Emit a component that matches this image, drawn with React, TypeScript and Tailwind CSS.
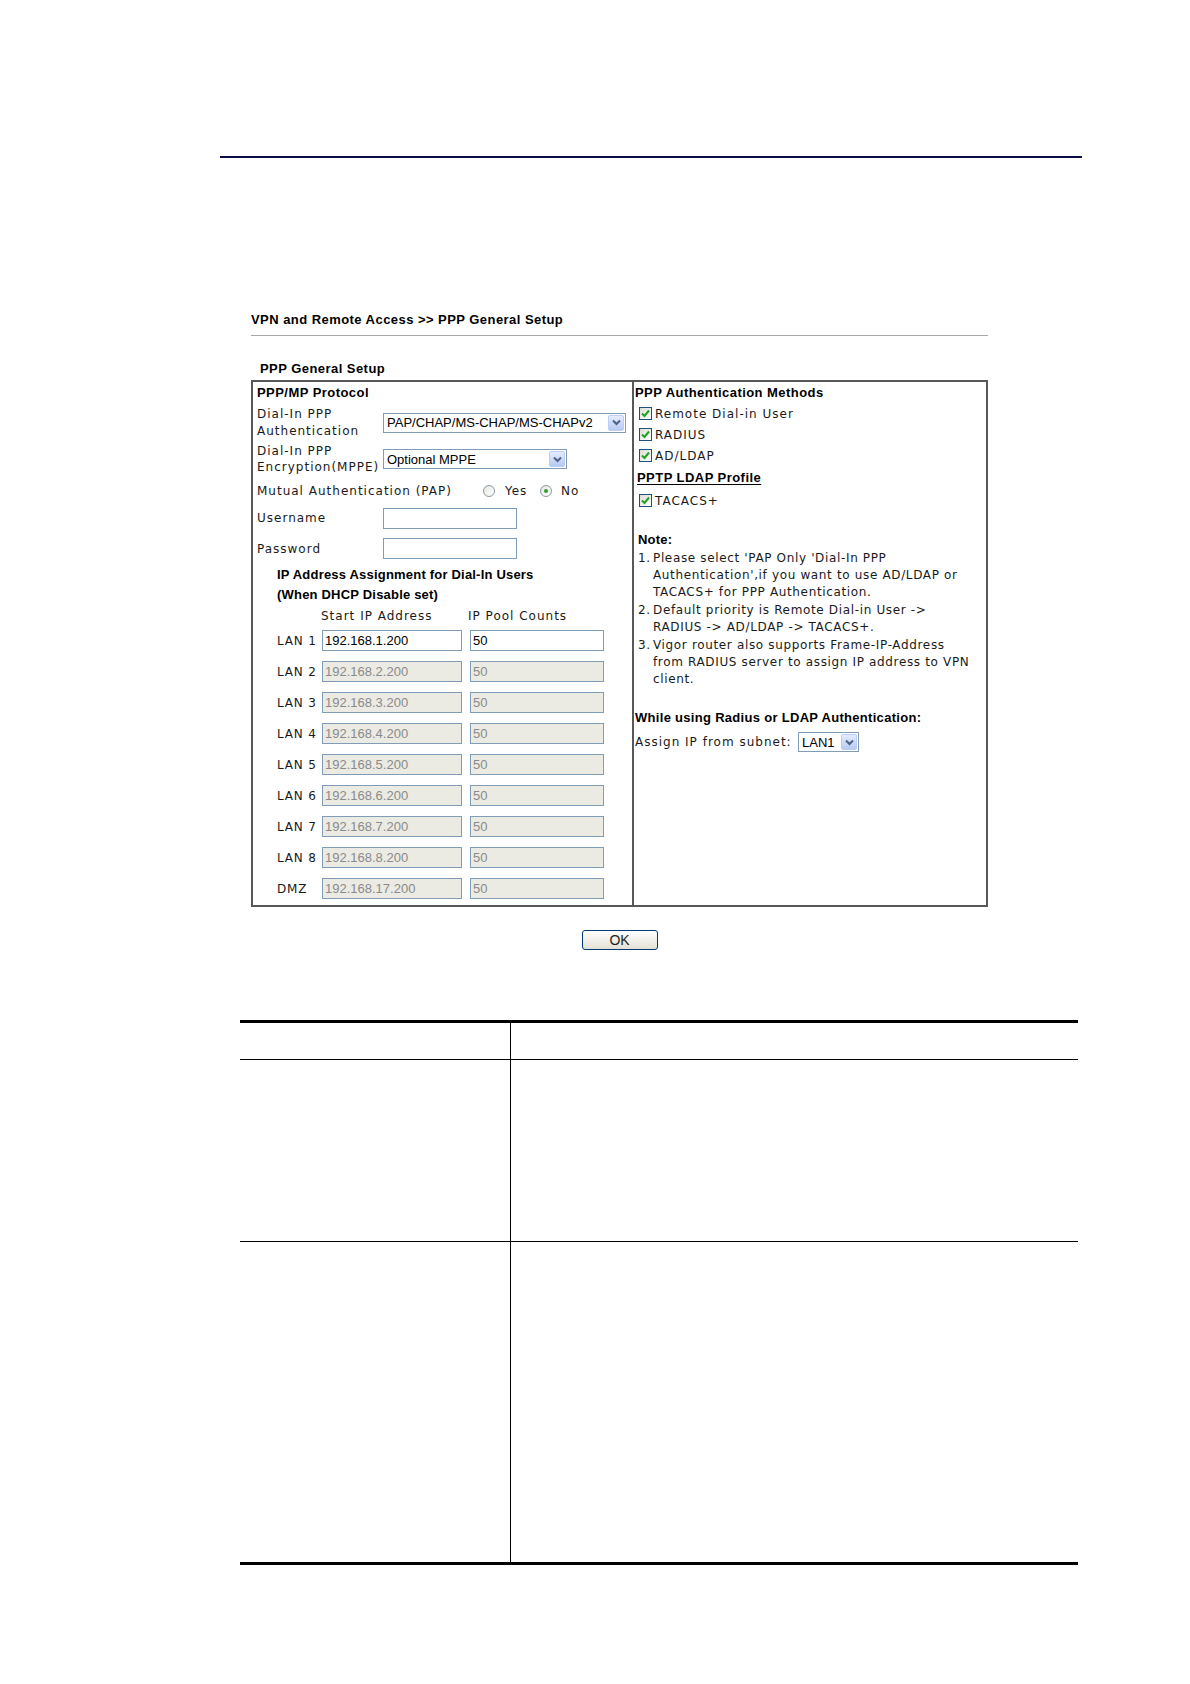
import React from 'react';

const label = "font-['DejaVu_Sans',sans-serif] text-[12px] text-[#1a1a1a]";
const bold = "font-['Liberation_Sans',Arial,sans-serif] font-bold text-[13px] text-black";
const field = "font-['Liberation_Sans',Arial,sans-serif] text-[13px]";

function Chevron() {
  return (
    <span className="w-[16px] h-[16px] flex items-center justify-center rounded-[2px] border border-[#bccef5] bg-gradient-to-b from-[#e4ecfd] to-[#b7caf4]">
      <svg width="9" height="7" viewBox="0 0 9 7">
        <path d="M1 1.5 L4.5 5 L8 1.5" fill="none" stroke="#4d6185" strokeWidth="2" />
      </svg>
    </span>
  );
}

function Select({ value, width }: { value: string; width: string }) {
  return (
    <div className={`${width} h-[20px] border border-[#7f9db9] bg-white flex items-center justify-between pl-[3px] pr-[1px]`}>
      <span className={`${field} text-black leading-none whitespace-nowrap`}>{value}</span>
      <Chevron />
    </div>
  );
}

function TextInput({ value, width, disabled }: { value?: string; width: string; disabled?: boolean }) {
  return (
    <div
      className={`${width} h-[21px] border border-[#7f9db9] flex items-center pl-[2px] ${
        disabled ? 'bg-[#ebebe4] text-[#8a8a8a]' : 'bg-white text-black'
      }`}
    >
      <span className={`${field} leading-none`}>{value}</span>
    </div>
  );
}

function Checkbox() {
  return (
    <span className="w-[13px] h-[13px] border border-[#1c5180] bg-gradient-to-br from-[#dcdcd7] to-white flex items-center justify-center">
      <svg width="9" height="9" viewBox="0 0 9 9">
        <path d="M1 4.5 L3.5 7 L8 1.5" fill="none" stroke="#21a121" strokeWidth="2" />
      </svg>
    </span>
  );
}

function Radio({ checked }: { checked?: boolean }) {
  return (
    <span className="w-[12px] h-[12px] rounded-full border border-[#8a98a6] bg-gradient-to-br from-[#e6e6e0] to-white flex items-center justify-center">
      {checked && <span className="w-[4px] h-[4px] rounded-full bg-[#2f9e2f]" />}
    </span>
  );
}

const lans = [
  { name: 'LAN 1', ip: '192.168.1.200', on: true },
  { name: 'LAN 2', ip: '192.168.2.200' },
  { name: 'LAN 3', ip: '192.168.3.200' },
  { name: 'LAN 4', ip: '192.168.4.200' },
  { name: 'LAN 5', ip: '192.168.5.200' },
  { name: 'LAN 6', ip: '192.168.6.200' },
  { name: 'LAN 7', ip: '192.168.7.200' },
  { name: 'LAN 8', ip: '192.168.8.200' },
  { name: 'DMZ', ip: '192.168.17.200' },
];

const methods = ['Remote Dial-in User', 'RADIUS', 'AD/LDAP'];

function NoteItem({ n, lines }: { n: string; lines: string[] }) {
  return (
    <div className={`${label} flex leading-[17px] mb-[1px] tracking-[0.65px]`}>
      <span className="w-[15px] shrink-0">{n}</span>
      <div>
        {lines.map((l) => (
          <div key={l} className="whitespace-nowrap">
            {l}
          </div>
        ))}
      </div>
    </div>
  );
}

export default function App() {
  return (
    <div className="w-[1190px] min-h-[1684px] bg-white">
      <div className="pt-[156px] pl-[220px]">
        <div className="w-[862px] h-[2px] bg-[#0b0b45]" />
      </div>

      <div className="ml-[251px] w-[737px] mt-[154px]">
        <div className={`${bold} tracking-[0.45px] leading-[16px] pb-[7px] border-b border-[#a8a8a8]`}>
          VPN and Remote Access &gt;&gt; PPP General Setup
        </div>
        <div className={`${bold} tracking-[0.45px] leading-[16px] mt-[25px] ml-[9px]`}>PPP General Setup</div>

        <div className="mt-[3px] h-[527px] border-2 border-[#585858] flex">
          {/* left column */}
          <div className="w-[381px] border-r-2 border-[#585858] pl-[4px] flex flex-col">
            <div className={`${bold} tracking-[0.45px] h-[22px] flex items-center`}>PPP/MP Protocol</div>

            <div className="h-[37px] flex items-center">
              <div className={`${label} tracking-[1px] w-[126px] leading-[17px]`}>
                Dial-In PPP
                <br />
                Authentication
              </div>
              <Select value="PAP/CHAP/MS-CHAP/MS-CHAPv2" width="w-[243px]" />
            </div>

            <div className="h-[36px] flex items-center">
              <div className={`${label} tracking-[1px] w-[126px] leading-[16px] whitespace-nowrap`}>
                Dial-In PPP
                <br />
                Encryption(MPPE)
              </div>
              <Select value="Optional MPPE" width="w-[184px]" />
            </div>

            <div className="h-[28px] flex items-center">
              <span className={`${label} tracking-[1px] w-[226px] whitespace-nowrap`}>Mutual Authentication (PAP)</span>
              <Radio />
              <span className={`${label} tracking-[1px] ml-[10px] w-[35px]`}>Yes</span>
              <Radio checked />
              <span className={`${label} tracking-[1px] ml-[9px]`}>No</span>
            </div>

            <div className="h-[26px] flex items-center">
              <span className={`${label} tracking-[1px] w-[126px]`}>Username</span>
              <TextInput width="w-[134px]" />
            </div>

            <div className="h-[35px] flex items-center">
              <span className={`${label} tracking-[1px] w-[126px]`}>Password</span>
              <TextInput width="w-[134px]" />
            </div>

            <div className={`${bold} tracking-[0.2px] h-[18px] flex items-center pl-[20px]`}>
              IP Address Assignment for Dial-In Users
            </div>
            <div className={`${bold} tracking-[0.2px] h-[22px] flex items-center pl-[20px]`}>
              (When DHCP Disable set)
            </div>

            <div className="h-[19px] flex items-center pl-[64px]">
              <span className={`${label} tracking-[1px] w-[147px]`}>Start IP Address</span>
              <span className={`${label} tracking-[1px]`}>IP Pool Counts</span>
            </div>

            {lans.map((lan) => (
              <div key={lan.name} className="h-[31px] flex items-center pl-[20px]">
                <span className={`${label} tracking-[0.8px] w-[45px]`}>{lan.name}</span>
                <TextInput value={lan.ip} width="w-[140px]" disabled={!lan.on} />
                <span className="w-[8px]" />
                <TextInput value="50" width="w-[134px]" disabled={!lan.on} />
              </div>
            ))}
          </div>

          {/* right column */}
          <div className="flex-1 pl-[1px] flex flex-col">
            <div className={`${bold} tracking-[0.45px] h-[21px] flex items-center`}>PPP Authentication Methods</div>
            {methods.map((m) => (
              <div key={m} className="h-[21px] flex items-center pl-[4px]">
                <Checkbox />
                <span className={`${label} tracking-[1px] ml-[3px]`}>{m}</span>
              </div>
            ))}
            <div className="h-[23px] flex items-center pl-[2px]">
              <span className={`${bold} tracking-[0.45px] underline underline-offset-2`}>PPTP LDAP Profile</span>
            </div>
            <div className="h-[23px] flex items-center pl-[4px]">
              <Checkbox />
              <span className={`${label} tracking-[1px] ml-[3px]`}>TACACS+</span>
            </div>

            <div className="pl-[3px] mt-[19px]">
              <div className={`${bold} tracking-[0.2px] leading-[17px]`}>Note:</div>
              <div className="pt-[2px]">
                <NoteItem
                  n="1."
                  lines={[
                    "Please select 'PAP Only 'Dial-In PPP",
                    "Authentication',if you want to use AD/LDAP or",
                    'TACACS+ for PPP Authentication.',
                  ]}
                />
                <NoteItem n="2." lines={['Default priority is Remote Dial-in User ->', 'RADIUS -> AD/LDAP -> TACACS+.']} />
                <NoteItem
                  n="3."
                  lines={[
                    'Vigor router also supports Frame-IP-Address',
                    'from RADIUS server to assign IP address to VPN',
                    'client.',
                  ]}
                />
              </div>
            </div>

            <div className={`${bold} tracking-[0.3px] leading-[17px] mt-[20px]`}>
              While using Radius or LDAP Authentication:
            </div>
            <div className="h-[20px] flex items-center mt-[6px]">
              <span className={`${label} tracking-[1px] w-[163px] whitespace-nowrap`}>Assign IP from subnet:</span>
              <Select value="LAN1" width="w-[61px]" />
            </div>
          </div>
        </div>

        <div className="mt-[23px] flex justify-center">
          <button className="w-[76px] h-[20px] rounded-[3px] border border-[#003c74] bg-gradient-to-b from-white to-[#e3e1d6] flex items-center justify-center">
            <span className={`${field} text-[14px] leading-none text-[#222]`}>OK</span>
          </button>
        </div>
      </div>

      <div className="ml-[240px] w-[838px] mt-[70px] border-t-[3px] border-b-[3px] border-black">
        <div className="h-[37px] flex border-b border-black">
          <div className="w-[271px] border-r border-black" />
        </div>
        <div className="h-[182px] flex border-b border-black">
          <div className="w-[271px] border-r border-black" />
        </div>
        <div className="h-[320px] flex">
          <div className="w-[271px] border-r border-black" />
        </div>
      </div>
    </div>
  );
}
